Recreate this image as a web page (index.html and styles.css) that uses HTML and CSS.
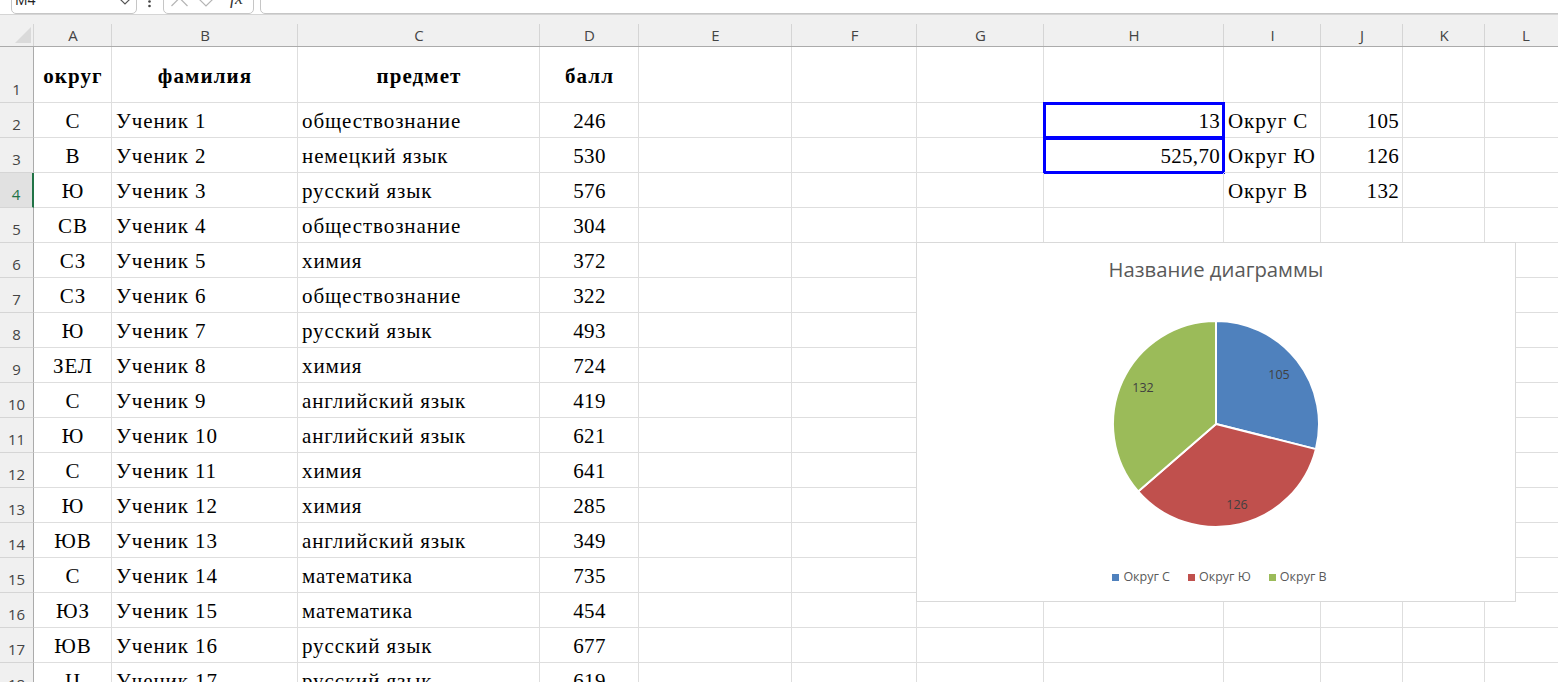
FILE: index.html
```html
<!DOCTYPE html>
<html lang="ru">
<head>
	<meta charset="UTF-8">
	<meta name="viewport" content="width=device-width, initial-scale=1.0">
	<title>Книга1 - Excel</title>
	<link rel="stylesheet" href="styles.css">
</head>
<body>
<div class="page">
	<div class="formula-bar">
		<div class="name-box">
			<span class="name-value">M4</span>
			<svg class="chevron" width="12" height="8" viewBox="0 0 12 8"><polyline points="1,1 6,6 11,1" fill="none" stroke="#555" stroke-width="1.2"/></svg>
		</div>
		<svg class="more-dots" width="5" height="8" viewBox="0 0 5 8"><circle cx="2.5" cy="1.5" r="1.3" fill="#444"/><circle cx="2.5" cy="6" r="1.3" fill="#444"/></svg>
		<div class="fx-tools">
			<svg class="fx-icons" width="56" height="28" viewBox="0 0 56 28">
				<line x1="6.5" y1="5" x2="22.5" y2="21" stroke="#b4b4b4" stroke-width="1.2"/>
				<line x1="22.5" y1="5" x2="6.5" y2="21" stroke="#b4b4b4" stroke-width="1.2"/>
				<polyline points="33,13 41,21 49,13" fill="none" stroke="#b4b4b4" stroke-width="1.2"/>
			</svg>
			<span class="fx-label">fx</span>
		</div>
		<div class="formula-input"></div>
	</div>

	<div class="sheet">
		<div class="row col-heads">
			<div class="corner"><svg width="16" height="16" viewBox="0 0 16 16"><polygon points="0,16 16,16 16,0" fill="#dadada"/></svg></div>
			<div class="col-head">A</div><div class="col-head">B</div><div class="col-head">C</div><div class="col-head">D</div>
			<div class="col-head">E</div><div class="col-head">F</div><div class="col-head">G</div><div class="col-head">H</div>
			<div class="col-head">I</div><div class="col-head">J</div><div class="col-head">K</div><div class="col-head">L</div>
		</div>

		<div class="row row-title">
			<div class="row-head">1</div>
			<div class="cell c b">округ</div><div class="cell c b">фамилия</div><div class="cell c b">предмет</div><div class="cell c b">балл</div>
			<div class="cell"></div><div class="cell"></div><div class="cell"></div><div class="cell"></div><div class="cell"></div><div class="cell"></div><div class="cell"></div><div class="cell"></div>
		</div>
		<div class="row">
			<div class="row-head">2</div>
			<div class="cell c">С</div><div class="cell">Ученик 1</div><div class="cell">обществознание</div><div class="cell c n">246</div>
			<div class="cell"></div><div class="cell"></div><div class="cell"></div><div class="cell r n sel">13</div><div class="cell">Округ С</div><div class="cell r n">105</div><div class="cell"></div><div class="cell"></div>
		</div>
		<div class="row">
			<div class="row-head">3</div>
			<div class="cell c">В</div><div class="cell">Ученик 2</div><div class="cell">немецкий язык</div><div class="cell c n">530</div>
			<div class="cell"></div><div class="cell"></div><div class="cell"></div><div class="cell r n sel">525,70</div><div class="cell">Округ Ю</div><div class="cell r n">126</div><div class="cell"></div><div class="cell"></div>
		</div>
		<div class="row">
			<div class="row-head active">4</div>
			<div class="cell c">Ю</div><div class="cell">Ученик 3</div><div class="cell">русский язык</div><div class="cell c n">576</div>
			<div class="cell"></div><div class="cell"></div><div class="cell"></div><div class="cell"></div><div class="cell">Округ В</div><div class="cell r n">132</div><div class="cell"></div><div class="cell"></div>
		</div>
		<div class="row">
			<div class="row-head">5</div>
			<div class="cell c">СВ</div><div class="cell">Ученик 4</div><div class="cell">обществознание</div><div class="cell c n">304</div>
			<div class="cell"></div><div class="cell"></div><div class="cell"></div><div class="cell"></div><div class="cell"></div><div class="cell"></div><div class="cell"></div><div class="cell"></div>
		</div>
		<div class="row">
			<div class="row-head">6</div>
			<div class="cell c">СЗ</div><div class="cell">Ученик 5</div><div class="cell">химия</div><div class="cell c n">372</div>
			<div class="cell"></div><div class="cell"></div><div class="cell"></div><div class="cell"></div><div class="cell"></div><div class="cell"></div><div class="cell"></div><div class="cell"></div>
		</div>
		<div class="row">
			<div class="row-head">7</div>
			<div class="cell c">СЗ</div><div class="cell">Ученик 6</div><div class="cell">обществознание</div><div class="cell c n">322</div>
			<div class="cell"></div><div class="cell"></div><div class="cell"></div><div class="cell"></div><div class="cell"></div><div class="cell"></div><div class="cell"></div><div class="cell"></div>
		</div>
		<div class="row">
			<div class="row-head">8</div>
			<div class="cell c">Ю</div><div class="cell">Ученик 7</div><div class="cell">русский язык</div><div class="cell c n">493</div>
			<div class="cell"></div><div class="cell"></div><div class="cell"></div><div class="cell"></div><div class="cell"></div><div class="cell"></div><div class="cell"></div><div class="cell"></div>
		</div>
		<div class="row">
			<div class="row-head">9</div>
			<div class="cell c">ЗЕЛ</div><div class="cell">Ученик 8</div><div class="cell">химия</div><div class="cell c n">724</div>
			<div class="cell"></div><div class="cell"></div><div class="cell"></div><div class="cell"></div><div class="cell"></div><div class="cell"></div><div class="cell"></div><div class="cell"></div>
		</div>
		<div class="row">
			<div class="row-head">10</div>
			<div class="cell c">С</div><div class="cell">Ученик 9</div><div class="cell">английский язык</div><div class="cell c n">419</div>
			<div class="cell"></div><div class="cell"></div><div class="cell"></div><div class="cell"></div><div class="cell"></div><div class="cell"></div><div class="cell"></div><div class="cell"></div>
		</div>
		<div class="row">
			<div class="row-head">11</div>
			<div class="cell c">Ю</div><div class="cell">Ученик 10</div><div class="cell">английский язык</div><div class="cell c n">621</div>
			<div class="cell"></div><div class="cell"></div><div class="cell"></div><div class="cell"></div><div class="cell"></div><div class="cell"></div><div class="cell"></div><div class="cell"></div>
		</div>
		<div class="row">
			<div class="row-head">12</div>
			<div class="cell c">С</div><div class="cell">Ученик 11</div><div class="cell">химия</div><div class="cell c n">641</div>
			<div class="cell"></div><div class="cell"></div><div class="cell"></div><div class="cell"></div><div class="cell"></div><div class="cell"></div><div class="cell"></div><div class="cell"></div>
		</div>
		<div class="row">
			<div class="row-head">13</div>
			<div class="cell c">Ю</div><div class="cell">Ученик 12</div><div class="cell">химия</div><div class="cell c n">285</div>
			<div class="cell"></div><div class="cell"></div><div class="cell"></div><div class="cell"></div><div class="cell"></div><div class="cell"></div><div class="cell"></div><div class="cell"></div>
		</div>
		<div class="row">
			<div class="row-head">14</div>
			<div class="cell c">ЮВ</div><div class="cell">Ученик 13</div><div class="cell">английский язык</div><div class="cell c n">349</div>
			<div class="cell"></div><div class="cell"></div><div class="cell"></div><div class="cell"></div><div class="cell"></div><div class="cell"></div><div class="cell"></div><div class="cell"></div>
		</div>
		<div class="row">
			<div class="row-head">15</div>
			<div class="cell c">С</div><div class="cell">Ученик 14</div><div class="cell">математика</div><div class="cell c n">735</div>
			<div class="cell"></div><div class="cell"></div><div class="cell"></div><div class="cell"></div><div class="cell"></div><div class="cell"></div><div class="cell"></div><div class="cell"></div>
		</div>
		<div class="row">
			<div class="row-head">16</div>
			<div class="cell c">ЮЗ</div><div class="cell">Ученик 15</div><div class="cell">математика</div><div class="cell c n">454</div>
			<div class="cell"></div><div class="cell"></div><div class="cell"></div><div class="cell"></div><div class="cell"></div><div class="cell"></div><div class="cell"></div><div class="cell"></div>
		</div>
		<div class="row">
			<div class="row-head">17</div>
			<div class="cell c">ЮВ</div><div class="cell">Ученик 16</div><div class="cell">русский язык</div><div class="cell c n">677</div>
			<div class="cell"></div><div class="cell"></div><div class="cell"></div><div class="cell"></div><div class="cell"></div><div class="cell"></div><div class="cell"></div><div class="cell"></div>
		</div>
		<div class="row">
			<div class="row-head">18</div>
			<div class="cell c">Ц</div><div class="cell">Ученик 17</div><div class="cell">русский язык</div><div class="cell c n">619</div>
			<div class="cell"></div><div class="cell"></div><div class="cell"></div><div class="cell"></div><div class="cell"></div><div class="cell"></div><div class="cell"></div><div class="cell"></div>
		</div>
	</div>

	<div class="chart">
		<div class="chart-title">Название диаграммы</div>
		<svg class="pie" width="220" height="220" viewBox="0 0 220 220">
			<path d="M110 110 L110 7 A103 103 0 0 1 209.89 135.14 Z" fill="#4f81bd" stroke="#fff" stroke-width="2" stroke-linejoin="round"/>
			<path d="M110 110 L209.89 135.14 A103 103 0 0 1 32.14 177.43 Z" fill="#c0504d" stroke="#fff" stroke-width="2" stroke-linejoin="round"/>
			<path d="M110 110 L32.14 177.43 A103 103 0 0 1 110 7 Z" fill="#9bbb59" stroke="#fff" stroke-width="2" stroke-linejoin="round"/>
			<text class="pie-label" x="173" y="65">105</text>
			<text class="pie-label" x="131" y="195">126</text>
			<text class="pie-label" x="37" y="78">132</text>
		</svg>
		<div class="legend">
			<div class="legend-item"><span class="swatch blue"></span>Округ С</div>
			<div class="legend-item"><span class="swatch red"></span>Округ Ю</div>
			<div class="legend-item"><span class="swatch green"></span>Округ В</div>
		</div>
	</div>
</div>
</body>
</html>
```

FILE: styles.css
```css
* {
	box-sizing: border-box;
}

body {
	margin: 0;
	background-color: #fff;
	font-family: 'Liberation Serif', 'Times New Roman', serif;
	overflow: hidden;
}

.page {
	position: relative;
	width: 1558px;
	height: 682px;
	overflow: hidden;
}

/* formula bar, mostly scrolled out of view */
.formula-bar {
	display: flex;
	align-items: flex-end;
	height: 14px;
	padding-left: 11px;
	overflow: hidden;
	font-family: 'Open Sans', sans-serif;
}

.name-box {
	display: flex;
	justify-content: space-between;
	flex-shrink: 0;
	width: 126px;
	height: 30px;
	padding: 0 5px 0 3px;
	border: 1px solid #c6c6c6;
	border-radius: 5px;
}

.name-value {
	padding-top: 5px;
	font-size: 14px;
	line-height: 20px;
	color: #222;
}

.chevron {
	margin-top: 13px;
}

.more-dots {
	align-self: flex-start;
	margin: 0 11px 0 10px;
}

.fx-tools {
	display: flex;
	flex-shrink: 0;
	width: 91px;
	height: 30px;
	padding-left: 1px;
	border: 1px solid #c6c6c6;
	border-radius: 5px;
}

.fx-label {
	margin-left: 9px;
	padding-top: 3px;
	font-family: 'Liberation Serif', serif;
	font-style: italic;
	font-size: 18px;
	line-height: 20px;
	color: #333;
}

.formula-input {
	flex: 1;
	height: 30px;
	margin: 0 -8px 0 6px;
	border: 1px solid #c6c6c6;
	border-radius: 5px;
}

/* grid */
.row {
	display: grid;
	grid-template-columns: 34px 78px 186px 242px 99px 153px 125px 127px 180px 97px 82px 82px 82px;
	height: 35px;
}

.col-heads {
	height: 33px;
	border-top: 1px solid #d5d5d5;
	background-color: #f0f0f0;
}

.corner,
.col-head {
	display: flex;
	justify-content: center;
	align-items: flex-end;
	padding-bottom: 1px;
	border-bottom: 1px solid #ababab;
	background: linear-gradient(#d5d5d5, #d5d5d5) right bottom / 1px 22px no-repeat;
	font-family: 'Open Sans', sans-serif;
	font-size: 15px;
	line-height: 20px;
	color: #444;
}

.corner {
	justify-content: flex-end;
	padding: 0 3px 3px 0;
}

.row-title {
	height: 56px;
}

.row-head {
	display: flex;
	justify-content: center;
	align-items: flex-end;
	padding-bottom: 3px;
	border-right: 1px solid #ababab;
	border-bottom: 1px solid #d5d5d5;
	background-color: #f0f0f0;
	font-family: 'Open Sans', sans-serif;
	font-size: 15px;
	line-height: 20px;
	color: #444;
}

.row-head.active {
	border-right: 2px solid #217346;
	background-color: #e1e1e1;
	color: #217346;
}

.cell {
	display: flex;
	align-items: flex-end;
	padding: 0 3px 4px 4px;
	border-right: 1px solid #dedede;
	border-bottom: 1px solid #dedede;
	font-size: 21px;
	line-height: 24px;
	letter-spacing: 0.9px;
	color: #000;
	white-space: nowrap;
	overflow: hidden;
}

.cell.n {
	letter-spacing: 0.3px;
}

.cell.c {
	justify-content: center;
}

.cell.r {
	justify-content: flex-end;
}

.cell.b {
	align-items: center;
	padding-top: 3px;
	padding-bottom: 0;
	font-weight: bold;
	letter-spacing: 1.1px;
}

.cell.sel {
	outline: 3px solid #0000ff;
	outline-offset: -2px;
}

/* chart */
.chart {
	position: absolute;
	left: 916px;
	top: 242px;
	width: 600px;
	height: 360px;
	display: flex;
	flex-direction: column;
	align-items: center;
	border: 1px solid #d9d9d9;
	background-color: #fff;
	font-family: 'Open Sans', sans-serif;
}

.chart-title {
	margin-top: 12px;
	font-size: 20.3px;
	line-height: 28px;
	color: #595959;
}

.pie {
	margin-top: 31px;
}

.pie-label {
	font-family: 'Open Sans', sans-serif;
	font-size: 12.5px;
	fill: #404040;
	text-anchor: middle;
}

.legend {
	display: flex;
	gap: 18px;
	margin: 35px 0 0 7px;
	font-size: 12.5px;
	line-height: 16px;
	color: #595959;
}

.legend-item {
	display: flex;
	align-items: center;
	gap: 4px;
}

.swatch {
	width: 7px;
	height: 7px;
}

.swatch.blue {
	background-color: #4f81bd;
}

.swatch.red {
	background-color: #c0504d;
}

.swatch.green {
	background-color: #9bbb59;
}
```
